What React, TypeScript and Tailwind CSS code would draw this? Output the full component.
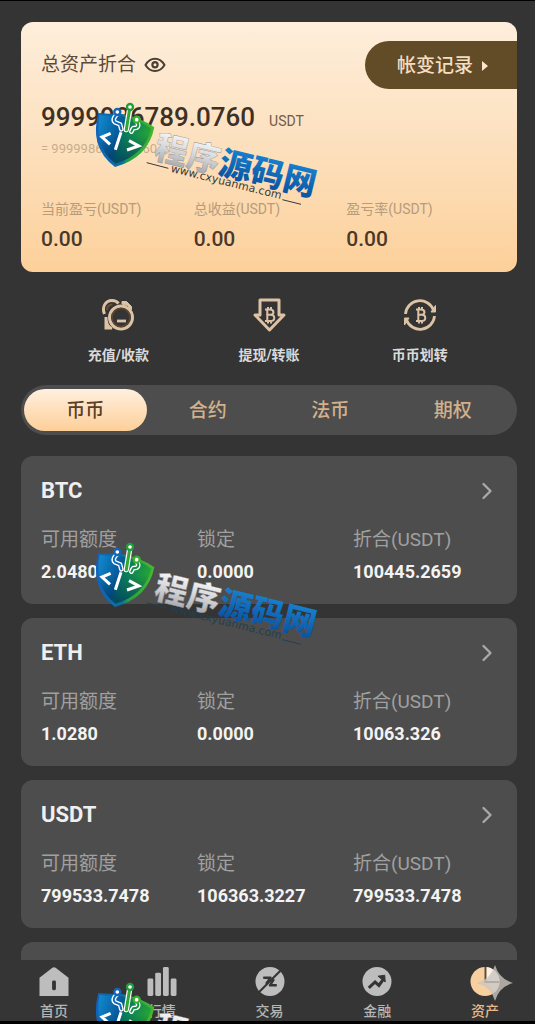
import { ChevronRight } from "lucide-react";
import { clsx } from "clsx";

// Reusable classes
const pageFont = "font-[Roboto,'Noto_Sans_CJK_SC',sans-serif]";
const statLabel = "text-sm leading-5 text-[#b79c7c]";
const goldStroke = "#dcc3a5";

const stats = [
  { label: "当前盈亏(USDT)", value: "0.00" },
  { label: "总收益(USDT)", value: "0.00" },
  { label: "盈亏率(USDT)", value: "0.00" },
];

const tabs = ["币币", "合约", "法币", "期权"];

const coins = [
  { name: "BTC", available: "2.0480", locked: "0.0000", total: "100445.2659" },
  { name: "ETH", available: "1.0280", locked: "0.0000", total: "10063.326" },
  {
    name: "USDT",
    available: "799533.7478",
    locked: "106363.3227",
    total: "799533.7478",
  },
];

const EyeIcon = () => (
  <svg width="22" height="16" viewBox="0 0 22 16" fill="none" stroke="#4a3f33">
    <path
      d="M1.500 8C4 3.500 7.300 1.700 11 1.700S18 3.500 20.500 8C18 12.300 14.700 14 11 14S4 12.300 1.500 8Z"
      strokeWidth="2"
    />
    <circle cx="11" cy="7.800" r="2.600" strokeWidth="2.200" />
  </svg>
);

const BitcoinGlyph = () => (
  <path
    d="M14 12.500h5c4.600 0 4.600 5.300 0 5.300h-3 3.500c5 0 5 6.200 0 6.200H14M16.300 12.500V24M17 10v2.500M20 10v2.500M17 24v2.500M20 24v2.500"
    strokeWidth="2"
  />
);

const DepositIcon = () => (
  <svg width="36" height="36" viewBox="0 0 36 36" fill="none" stroke={goldStroke}>
    <path d="M4.500 17C1.500 10 5.500 3.500 12 3.500c3 0 5 1 6.500 3" strokeWidth="3" />
    <path d="M7 13c0-3.500 2-5.500 5.500-5.500" strokeWidth="2" stroke="#6d4f33" />
    <path d="M22 4.500h4.500l5 5v3l-4-4-5.500-1.500Z" fill={goldStroke} strokeWidth="1" />
    <circle cx="21" cy="20.500" r="11.500" strokeWidth="3" />
    <circle cx="21" cy="20.500" r="9" strokeWidth="1.500" stroke="#5c4430" />
    <path d="M17 24h9" strokeWidth="2.800" />
    <path d="M5.500 21v10.500h6.500c-4-2-5.500-6-5.500-10.500Z" fill={goldStroke} strokeWidth="2" />
  </svg>
);

const WithdrawIcon = () => (
  <svg width="36" height="36" viewBox="0 0 36 36" fill="none" stroke={goldStroke} strokeLinejoin="round">
    <path d="M9 3h19v15h5L18.500 33 4 18h5Z" strokeWidth="3" />
    <BitcoinGlyph />
  </svg>
);

const TransferIcon = () => (
  <svg width="36" height="36" viewBox="0 0 36 36" fill="none" stroke={goldStroke}>
    <path d="M3.500 17A14.500 14.500 0 0 1 31.500 13" strokeWidth="2.800" />
    <path d="M32.500 19A14.500 14.500 0 0 1 4.500 23" strokeWidth="2.800" />
    <path d="M33.500 8.500v6.500h-4.500ZM2.500 28v-7H7Z" fill={goldStroke} strokeWidth="1" />
    <BitcoinGlyph />
  </svg>
);

const actions = [
  { label: "充值/收款", icon: DepositIcon },
  { label: "提现/转账", icon: WithdrawIcon },
  { label: "币币划转", icon: TransferIcon },
];

const HomeIcon = () => (
  <svg width="30" height="30" viewBox="0 0 30 30">
    <path d="M0 11 13 1q2-1.500 4 0l13 10v19H0Z" fill="#bdbdbd" />
    <rect x="13" y="14" width="4" height="10" rx="1.500" fill="#353535" />
  </svg>
);

const MarketIcon = () => (
  <svg width="30" height="30" viewBox="0 0 30 30" fill="#bdbdbd">
    <rect x="0" y="12" width="6" height="18" rx="1.500" />
    <rect x="8" y="6" width="6" height="24" rx="1.500" />
    <rect x="16" y="0" width="6" height="30" rx="1.500" />
    <rect x="24" y="12" width="6" height="18" rx="1.500" />
  </svg>
);

const TradeIcon = () => (
  <svg width="30" height="30" viewBox="0 0 30 30" fill="none" stroke="#353535">
    <circle cx="15" cy="15" r="15" fill="#bdbdbd" stroke="none" />
    <path d="M26 3.500 3.500 26" strokeWidth="2.200" />
    <path d="M8 11h7.500L11 17.500M19 12.500l-4 6.500H22" strokeWidth="2.600" strokeLinejoin="round" />
  </svg>
);

const FinanceIcon = () => (
  <svg width="30" height="30" viewBox="0 0 30 30" fill="none" stroke="#353535">
    <circle cx="15" cy="15" r="15" fill="#bdbdbd" stroke="none" />
    <path d="m6.500 21.500 6.500-6 4 3.500 5-7" strokeWidth="3.200" />
    <path d="m16 9.500 7-1 .5 7Z" fill="#353535" strokeWidth="1" />
  </svg>
);

const AssetsIcon = () => (
  <svg width="30" height="30" viewBox="0 0 30 30">
    <circle cx="15" cy="15" r="15" fill="#f8cf9e" />
    <path d="M15 0a15 15 0 0 1 15 15H15Z" fill="#fdf1e2" />
    <path d="M15 15h15a15 15 0 0 1-5 11Z" fill="#fbe3c7" />
    <path d="M15.500 0v15.500H30" fill="none" stroke="#5e4a38" strokeWidth="2" />
  </svg>
);

const navItems = [
  { label: "首页", icon: HomeIcon },
  { label: "行情", icon: MarketIcon },
  { label: "交易", icon: TradeIcon },
  { label: "金融", icon: FinanceIcon },
  { label: "资产", icon: AssetsIcon },
];

interface WatermarkProps {
  id: string;
  className: string;
  urlColor: string;
}

// Tilted site stamp: shield logo, name and address
const Watermark = ({ id, className, urlColor }: WatermarkProps) => (
  <svg
    className={clsx("absolute overflow-visible", className)}
    width="230"
    height="105"
    viewBox="24 15 690 315"
    fill="none"
  >
    <defs>
      <linearGradient id={`${id}-rim`} x1="0" x2="1">
        <stop offset="0" stopColor="#1262bd" />
        <stop offset="0.450" stopColor="#0b6f9d" />
        <stop offset="0.550" stopColor="#259f45" />
        <stop offset="1" stopColor="#49b82f" />
      </linearGradient>
      <linearGradient id={`${id}-fill`} x1="0" y1="0" x2="1" y2="0.300">
        <stop offset="0" stopColor="#108cd0" />
        <stop offset="0.450" stopColor="#07599a" />
        <stop offset="0.560" stopColor="#087a5c" />
        <stop offset="1" stopColor="#26a535" />
      </linearGradient>
      <linearGradient id={`${id}-shade`} x1="0" y1="0" x2="0" y2="1">
        <stop offset="0.400" stopColor="#003a63" stopOpacity="0" />
        <stop offset="1" stopColor="#003a63" stopOpacity="0.800" />
      </linearGradient>
      <linearGradient id={`${id}-silver`} x1="0" y1="0" x2="0" y2="1">
        <stop offset="0.200" stopColor="#f6f6f7" />
        <stop offset="0.550" stopColor="#d3d4d7" />
        <stop offset="1" stopColor="#96989d" />
      </linearGradient>
      <linearGradient id={`${id}-blue`} x1="0" y1="0" x2="0" y2="1">
        <stop offset="0.100" stopColor="#1b87d6" />
        <stop offset="1" stopColor="#064a98" />
      </linearGradient>
    </defs>

    <path
      d="M40 54Q82 58 112 57Q168 68 208 97Q199 143 169 173Q139 202 90 216Q50 187 37 142Q27 102 40 54Z"
      fill={`url(#${id}-rim)`}
    />
    <path
      d="M44 60Q82 65 112 64Q166 76 199 101Q190 138 163 166Q136 193 92 206Q57 180 45 141Q36 104 44 60Z"
      fill={`url(#${id}-fill)`}
    />
    <path
      d="M44 60Q82 65 112 64Q166 76 199 101Q190 138 163 166Q136 193 92 206Q57 180 45 141Q36 104 44 60Z"
      fill={`url(#${id}-shade)`}
    />

    <g strokeLinecap="round" strokeLinejoin="round">
      <path d="M96 58Q80 73 90 82L105 88 109 103" stroke="#fff" strokeWidth="14" />
      <path d="M96 58Q80 73 90 82L105 88 109 103" stroke="#0d6cba" strokeWidth="6" />
      <path d="M156 80Q164 93 155 98L144 100 139 110" stroke="#fff" strokeWidth="14" />
      <path d="M156 80Q164 93 155 98L144 100 139 110" stroke="#149347" strokeWidth="6" />
      <path d="M134 42 124 104" stroke="#fff" strokeWidth="16" />
      <path d="M134 42 124 104" stroke="#32a536" strokeWidth="9" />
      <circle cx="97" cy="51" r="9" fill="#fff" stroke="#1565b7" strokeWidth="7" />
      <circle cx="135" cy="36" r="9" fill="#fff" stroke="#209d3c" strokeWidth="7" />
      <circle cx="155" cy="74" r="9" fill="#fff" stroke="#3baf32" strokeWidth="7" />
    </g>
    <path
      d="M77 115 51 126 75 148M108 112 91 164M132 137 161 153 126 165"
      stroke="#fff"
      strokeWidth="9"
    />

    <g transform="translate(258 162) rotate(13.600)">
      <text
        x="-47"
        y="38"
        fontSize="99"
        fontWeight="900"
        fontFamily="'Noto Sans CJK SC', sans-serif"
      >
        <tspan fill={`url(#${id}-silver)`} stroke="#85878c" strokeWidth="1">
          程序
        </tspan>
        <tspan fill={`url(#${id}-blue)`}>源码网</tspan>
      </text>
    </g>
    <g transform="translate(256 230) rotate(14)">
      <text
        fontSize="33"
        fontFamily="'DejaVu Sans', sans-serif"
        fill={urlColor}
      >
        www.cxyuanma.com
      </text>
    </g>
    <path d="m185 203 65 17M592 314l56 14" stroke={urlColor} strokeWidth="3" />
  </svg>
);

const BalanceCard = () => (
  <section className="rounded-xl bg-linear-to-b from-[#feeedb] via-[#fce0bd] to-[#fdd09a] pt-[19px] pb-[17px] pl-5">
    <div className="flex h-12 items-center justify-between">
      <div className="flex items-center gap-2">
        <h1 className="text-[19px] leading-6 text-[#5b4b3a]">总资产折合</h1>
        <button aria-label="显示资产">
          <EyeIcon />
        </button>
      </div>
      <button className="flex h-full w-[152px] items-center gap-2 rounded-l-3xl bg-[#624b27] pt-0.5 pl-8 text-[19px] font-medium text-[#f3dec2]">
        帐变记录
        <svg width="8" height="12" viewBox="0 0 8 12" fill="#f9e6cc">
          <path d="m1 1 6 5-6 5Z" />
        </svg>
      </button>
    </div>
    <p className="mt-[10px] flex items-baseline gap-[14px] leading-9 text-[#3e3024]">
      <span className="text-[26px] font-medium">9999986789.0760</span>
      <span className="text-sm text-[#6e5c48]">USDT</span>
    </p>
    <p className="mt-1 text-[13px] leading-5 text-[#c9ae8c]">
      = 9999986789.0760
    </p>
    <dl className="mt-10 grid w-[458px] max-w-full grid-cols-3">
      {stats.map((stat) => (
        <div key={stat.label}>
          <dt className={statLabel}>{stat.label}</dt>
          <dd className="mt-1 text-[21px] leading-8 font-medium text-[#4a392a]">
            {stat.value}
          </dd>
        </div>
      ))}
    </dl>
  </section>
);

const CoinCard = ({ coin }: { coin: (typeof coins)[number] }) => {
  const fields = [
    { label: "可用额度", value: coin.available },
    { label: "锁定", value: coin.locked },
    { label: "折合(USDT)", value: coin.total },
  ];

  return (
    <section className="rounded-xl bg-[#4d4d4d] pt-[19px] pr-2 pb-4 pl-5">
      <div className="flex h-8 items-center justify-between">
        <h2 className="text-[22px] leading-8 font-bold text-[#efefef]">
          {coin.name}
        </h2>
        <button aria-label={coin.name} className="mr-2 text-[#a9a9a9]">
          <ChevronRight size={28} strokeWidth={2} />
        </button>
      </div>
      <dl className="mt-[21px] grid grid-cols-3">
        {fields.map((field) => (
          <div key={field.label}>
            <dt className="text-[19px] leading-6 text-[#a0a0a0]">
              {field.label}
            </dt>
            <dd className="mt-1 text-lg leading-8 font-bold text-[#f3f3f3]">
              {field.value}
            </dd>
          </div>
        ))}
      </dl>
    </section>
  );
};

export default function App() {
  return (
    <div
      className={clsx(
        "relative flex h-screen flex-col overflow-hidden border-t border-b-3 border-black bg-[#343434]",
        pageFont,
      )}
    >
      <main className="flex-1 overflow-y-auto pt-[21px] pr-[18px] pl-[21px] [scrollbar-width:none]">
        <BalanceCard />

        <div className="mt-[25px] grid grid-cols-3 px-[22px]">
          {actions.map(({ label, icon: Icon }) => (
            <button key={label} className="flex flex-col items-center gap-3">
              <Icon />
              <span className="text-sm leading-5 font-bold text-[#dadada]">
                {label}
              </span>
            </button>
          ))}
        </div>

        <div
          role="tablist"
          className="mt-5 grid h-[50px] grid-cols-4 items-center rounded-full bg-[#4d4d4d] px-[3px]"
        >
          {tabs.map((tab, i) => (
            <button
              key={tab}
              role="tab"
              aria-selected={i === 0}
              className={clsx(
                "h-[42px] rounded-full pt-0.5 text-[19px] font-medium",
                i === 0
                  ? "bg-linear-to-b from-[#fff0df] to-[#fdcf98] text-[#5b4028]"
                  : "text-[#d2b08b]",
              )}
            >
              {tab}
            </button>
          ))}
        </div>

        <div className="mt-[21px] flex flex-col gap-[14px]">
          {coins.map((coin) => (
            <CoinCard key={coin.name} coin={coin} />
          ))}
          {/* Top of the next card, tucked behind the nav */}
          <div className="h-[18px] rounded-t-xl bg-[#4d4d4d]" />
        </div>
      </main>

      <nav className="flex h-[60px] shrink-0 justify-between bg-[#353535] pr-[35px] pl-[39px]">
        {navItems.map(({ label, icon: Icon }, i) => (
          <a
            key={label}
            href="#"
            className={clsx(
              "flex flex-col items-center gap-[5px] pt-[6px] text-sm leading-5 font-medium",
              i === 4 ? "text-[#e6b98a]" : "text-[#b5b5b5]",
            )}
          >
            <Icon />
            {label}
          </a>
        ))}
      </nav>

      <div className="pointer-events-none absolute inset-0">
        <Watermark id="wm1" className="top-[99px] left-[93px]" urlColor="#3a3a3a" />
        <Watermark id="wm2" className="top-[539px] left-[93px]" urlColor="#23404f" />
        <Watermark id="wm3" className="top-[979px] left-[93px]" urlColor="#23404f" />
        <svg
          className="absolute right-[22px] bottom-5"
          width="36"
          height="36"
          viewBox="0 0 36 36"
        >
          <path
            d="M18 0Q22 14 36 18 22 22 18 36 14 22 0 18 14 14 18 0Z"
            fill="#c9c5c0"
            fillOpacity="0.800"
          />
        </svg>
      </div>
    </div>
  );
}
